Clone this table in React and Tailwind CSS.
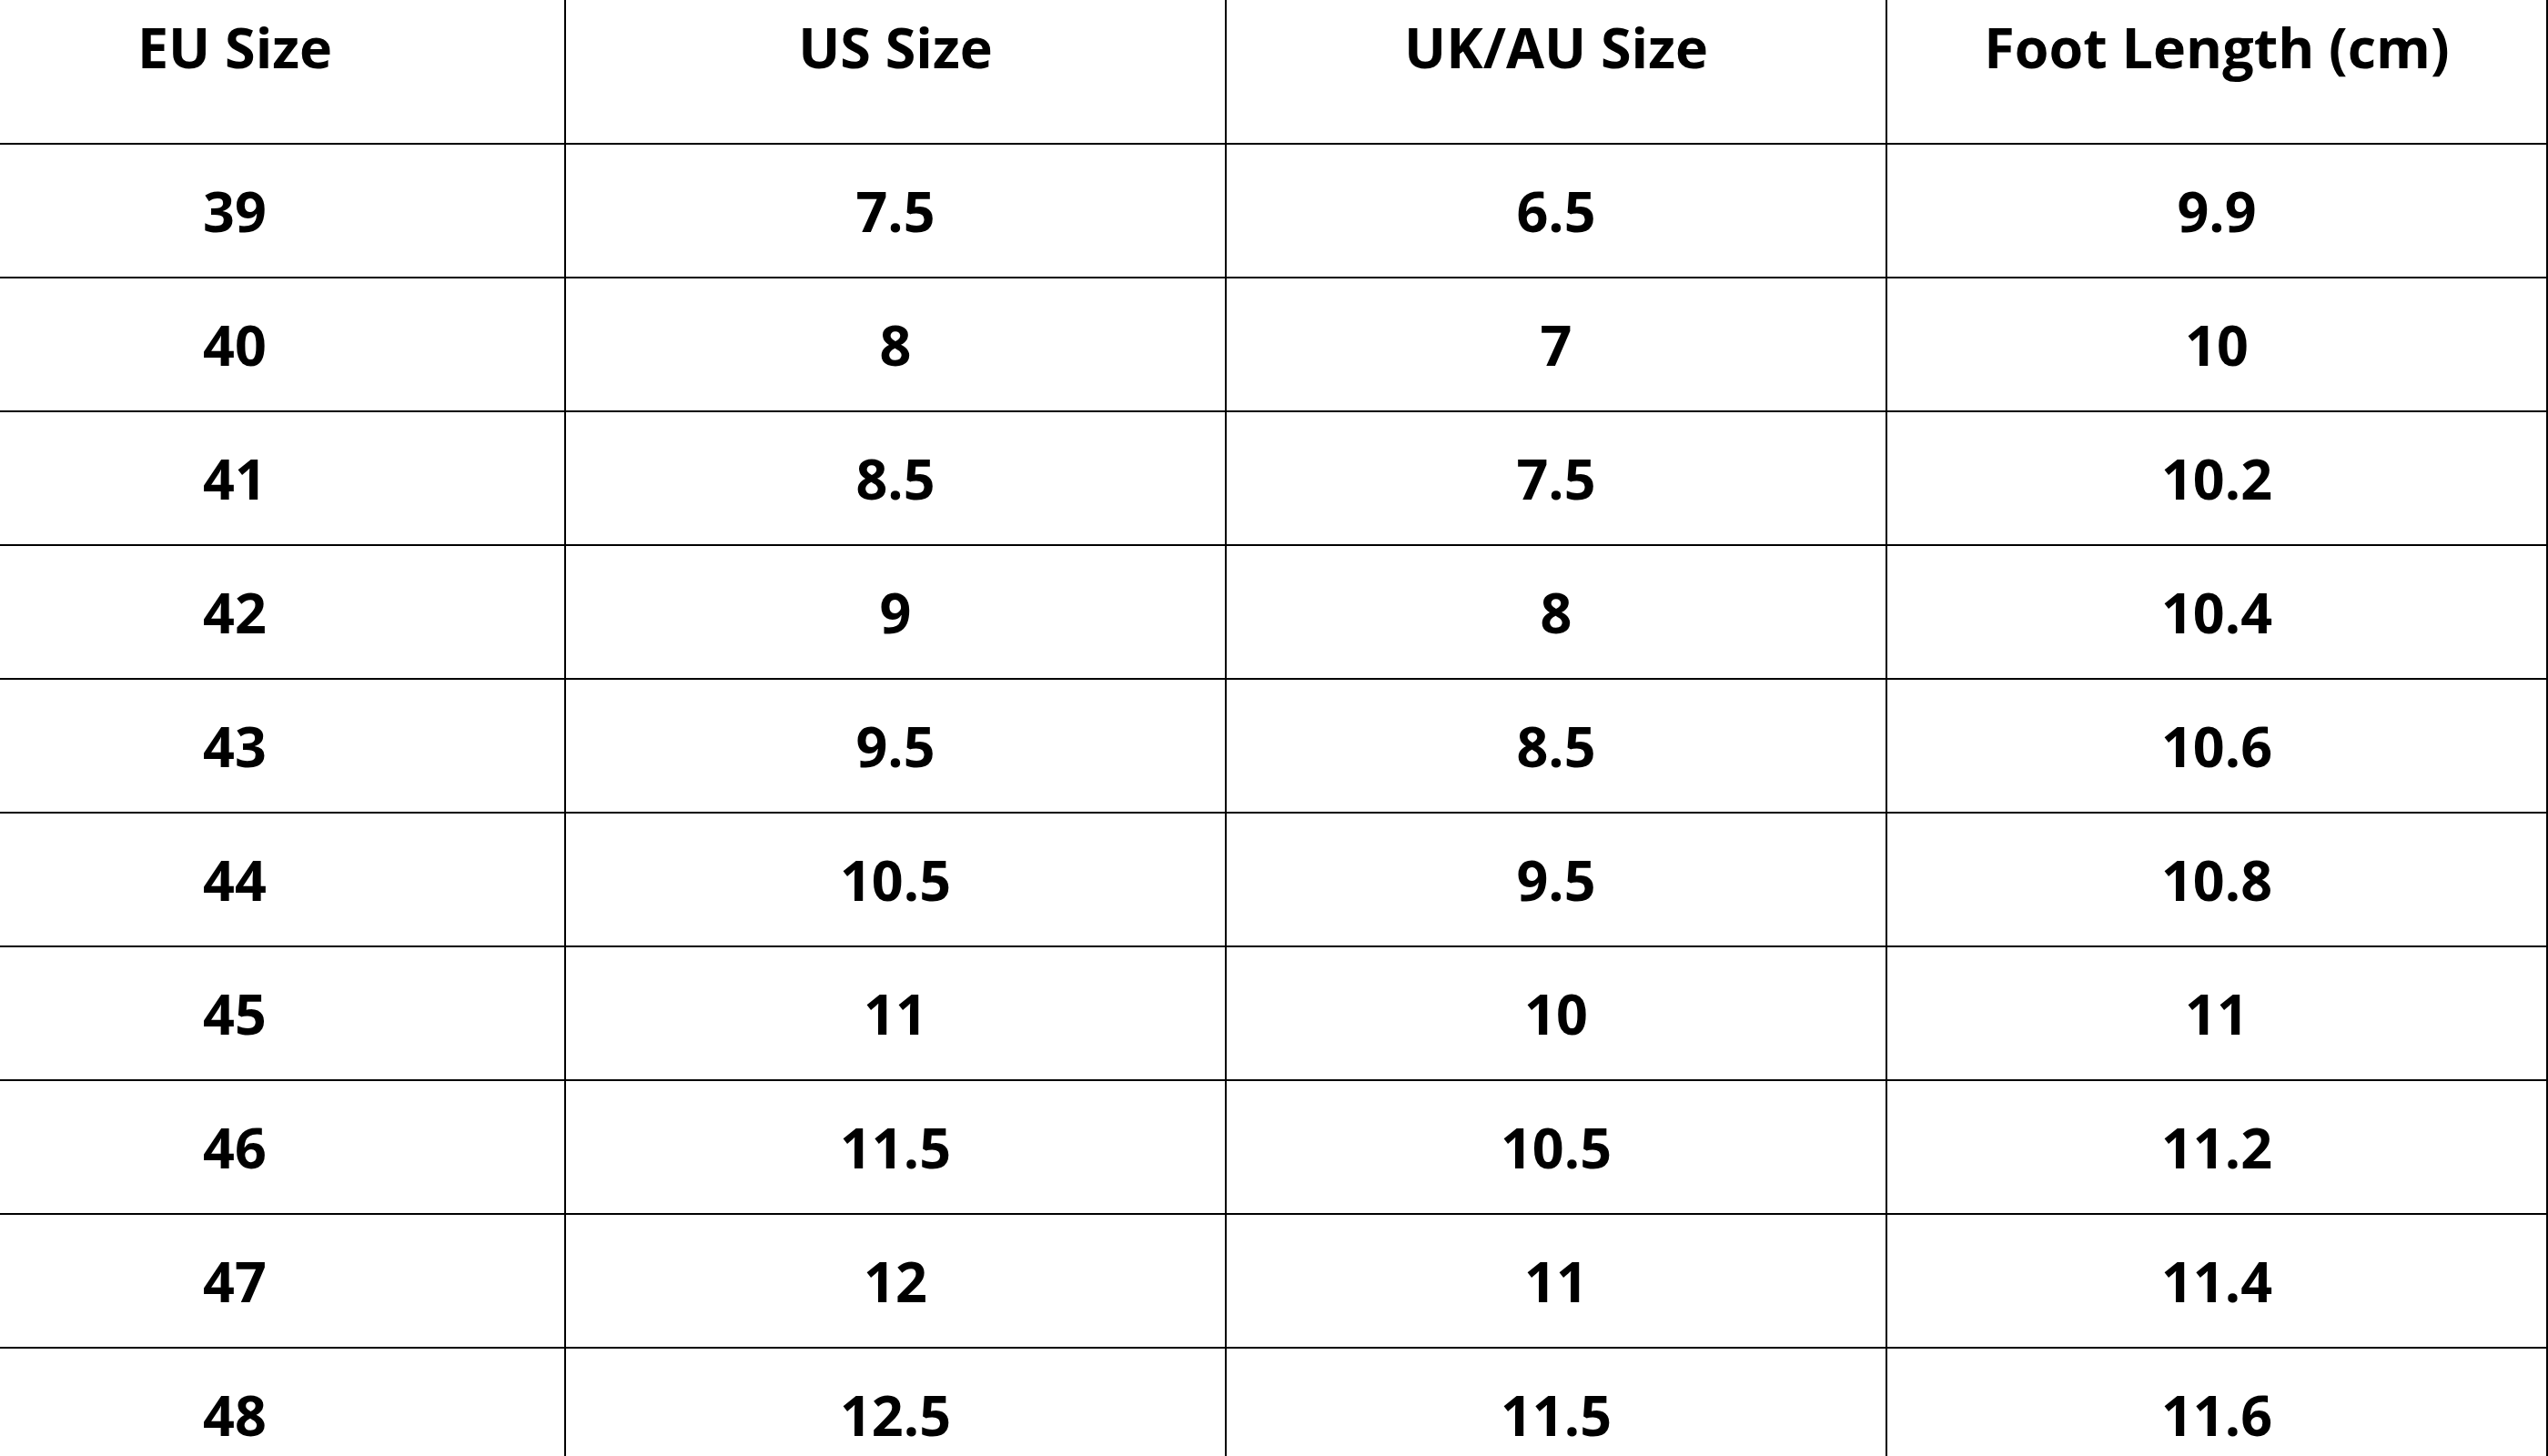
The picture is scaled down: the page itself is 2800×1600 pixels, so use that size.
import React from 'react';

const headers = ['EU Size', 'US Size', 'UK/AU Size', 'Foot Length (cm)'];

const rows = [
  ['39', '7.5', '6.5', '9.9'],
  ['40', '8', '7', '10'],
  ['41', '8.5', '7.5', '10.2'],
  ['42', '9', '8', '10.4'],
  ['43', '9.5', '8.5', '10.6'],
  ['44', '10.5', '9.5', '10.8'],
  ['45', '11', '10', '11'],
  ['46', '11.5', '10.5', '11.2'],
  ['47', '12', '11', '11.4'],
  ['48', '12.5', '11.5', '11.6'],
];

const App = () => {
  return (
    <div
      className="h-[1600px] w-[2800px] overflow-hidden bg-white text-black"
      style={{ fontFamily: '"Open Sans", "Noto Sans", sans-serif' }}
    >
      <div className="-ml-[104px] grid w-[2904px] grid-cols-4">
        {/* Header */}
        {headers.map((h) => (
          <div
            key={h}
            className="flex h-[159px] justify-center border-r-2 border-b-2 border-black pt-[21px] text-[61px] font-bold leading-none"
          >
            {h}
          </div>
        ))}

        {/* Rows */}
        {rows.map((row, i) =>
          row.map((cell, j) => (
            <div
              key={`${i}-${j}`}
              className="flex h-[147px] items-center justify-center border-r-2 border-b-2 border-black text-[61px] font-bold leading-none"
            >
              {cell}
            </div>
          ))
        )}
      </div>
    </div>
  );
};

export default App;
